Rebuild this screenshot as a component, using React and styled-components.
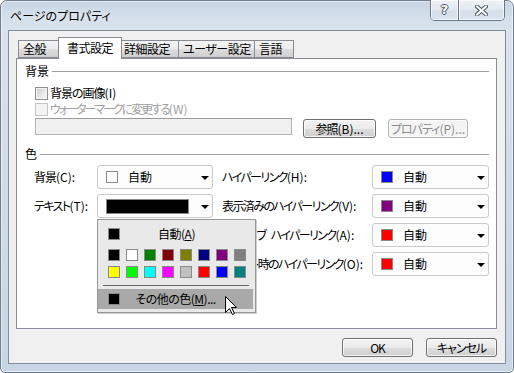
import React from 'react';
import styled, { createGlobalStyle } from 'styled-components';

const Global = createGlobalStyle`
  html, body { margin: 0; padding: 0; background: #ffffff; }
  body {
    width: 514px; height: 373px; overflow: hidden;
    font-family: "Noto Sans CJK JP", "Noto Sans", sans-serif;
    font-size: 12px;
    font-feature-settings: "palt" 1;
    color: #000;
  }
  * { box-sizing: border-box; }
`;

const Window = styled.div`
  width: 514px;
  height: 373px;
  border: 1px solid #6f7d8e;
  border-radius: 7px 7px 5px 5px;
  background: linear-gradient(180deg, #c6d4e4 0px, #d3deea 14px, #d9e3ee 30px, #cfdbe8 200px, #c8d5e4 373px);
  display: flex;
  flex-direction: column;
  box-shadow: inset 0 0 0 1px rgba(255,255,255,0.55);
`;

const TitleBar = styled.div`
  height: 29px;
  display: flex;
  align-items: flex-start;
  flex-shrink: 0;
`;

const TitleText = styled.div`
  padding-left: 9px;
  line-height: 29px;
  font-size: 12px;
  color: #000;
  text-shadow: 0 0 6px rgba(255,255,255,0.9);
`;

const Controls = styled.div`
  margin-left: auto;
  margin-right: 8px;
  margin-top: -1px;
  display: flex;
  height: 21px;
  border: 1px solid #6c7888;
  border-top: none;
  border-radius: 0 0 5px 5px;
  overflow: hidden;
`;

const CtrlButton = styled.div`
  width: ${p => p.$w}px;
  height: 100%;
  display: flex;
  align-items: center;
  justify-content: center;
  background: linear-gradient(180deg, #eef2f7 0%, #e3e9f1 45%, #d6dfe9 55%, #dbe4ee 100%);
  box-shadow: inset 0 0 0 1px rgba(255,255,255,0.7);
  & + & { border-left: 1px solid #6c7888; }
`;

const HelpGlyph = styled.span`
  font-family: "DejaVu Sans", sans-serif;
  font-weight: bold;
  font-size: 13px;
  line-height: 1;
  margin-top: -2px;
  color: #ffffff;
  text-shadow: 1px 0 0 #4d5866, -1px 0 0 #4d5866, 0 1px 0 #4d5866, 0 -1px 0 #4d5866;
`;

const Client = styled.div`
  flex: 1;
  margin: 0 7px 8px 7px;
  border: 1px solid #7f8d9d;
  background: #f0f0f0;
  display: flex;
  flex-direction: column;
  padding: 6px 8px 0 7px;
`;

const TabStrip = styled.div`
  display: flex;
  align-items: flex-end;
  height: 21px;
  padding-left: 2px;
  position: relative;
  z-index: 1;
`;

const Tab = styled.div`
  width: ${p => p.$w}px;
  height: ${p => (p.$active ? 22 : 18)}px;
  margin-bottom: ${p => (p.$active ? -1 : 0)}px;
  margin-left: ${p => (p.$active ? -2 : p.$first ? 0 : -1)}px;
  margin-right: ${p => (p.$active ? -2 : 0)}px;
  border: 1px solid #898c95;
  border-bottom: ${p => (p.$active ? 'none' : '1px solid #898c95')};
  background: ${p => (p.$active ? '#ffffff' : 'linear-gradient(180deg, #f3f3f3 0%, #ebebeb 50%, #dddddd 51%, #cfcfcf 100%)')};
  position: relative;
  z-index: ${p => (p.$active ? 2 : 1)};
  display: flex;
  align-items: center;
  justify-content: ${p => (p.$active ? 'center' : 'flex-start')};
  padding-left: ${p => (p.$active ? 0 : 4)}px;
  padding-bottom: ${p => (p.$active ? 2 : 0)}px;
  font-size: 12px;
  line-height: 16px;
  letter-spacing: -0.5px;
  white-space: nowrap;
`;

const Panel = styled.div`
  height: 271px;
  border: 1px solid #898c95;
  background: #ffffff;
  padding: 4px 7px 0 8px;
  display: flex;
  flex-direction: column;
  letter-spacing: -1px;
`;

const SectionHeader = styled.div`
  display: flex;
  align-items: center;
  gap: 3px;
  height: 16px;
  margin-top: ${p => p.$mt || 0}px;
  line-height: 16px;
  letter-spacing: 0;
`;

const Rule = styled.div`
  flex: 1;
  height: 1px;
  background: #a0a0a0;
`;

const Indent = styled.div`
  padding-left: 10px;
  margin-top: 6px;
  display: flex;
  flex-direction: column;
`;

const CheckRow = styled.div`
  display: flex;
  align-items: center;
  gap: 2px;
  height: 16px;
  line-height: 16px;
  color: ${p => (p.$disabled ? '#a0a0a0' : '#000')};
  letter-spacing: ${p => (p.$tight ? -2 : -1)}px;
  white-space: nowrap;
`;

const Key = styled.span`
  letter-spacing: 0;
`;

const CheckBox = styled.div`
  width: 13px;
  height: 13px;
  border: 1px solid ${p => (p.$disabled ? '#c4c4c4' : '#8e8f8f')};
  background: ${p => (p.$disabled ? '#f4f4f4' : 'linear-gradient(135deg, #c9ccd1 0%, #eeeeee 70%, #f8f8f8 100%)')};
  box-shadow: inset 0 0 0 1px #f4f4f4;
  flex-shrink: 0;
`;

const FieldRow = styled.div`
  display: flex;
  align-items: flex-start;
  margin-top: 1px;
`;

const TextField = styled.div`
  width: 257px;
  height: 17px;
  border: 1px solid #b5b5b5;
  border-top-color: #9a9a9a;
  background: #f0f0f0;
`;

const Button = styled.div`
  width: ${p => p.$w}px;
  height: 19px;
  margin-left: ${p => p.$ml || 0}px;
  margin-top: ${p => p.$mt || 0}px;
  display: flex;
  align-items: center;
  justify-content: center;
  font-size: 12px;
  line-height: 17px;
  letter-spacing: -1px;
  white-space: nowrap;
  color: ${p => (p.$disabled ? '#8d8d8d' : '#000')};
  border: 1px solid ${p => (p.$disabled ? '#adb2b5' : '#707070')};
  border-radius: 3px;
  background: ${p => (p.$disabled ? '#f4f4f4' : 'linear-gradient(180deg, #f2f2f2 0%, #ebebeb 50%, #dddddd 51%, #cfcfcf 100%)')};
  box-shadow: inset 0 0 0 1px rgba(255,255,255,0.75);
`;

const ColorGrid = styled.div`
  display: grid;
  grid-template-columns: 63px 116px 159px 117px;
  grid-auto-rows: 24px;
  row-gap: 5px;
  margin-top: 3px;
  margin-left: 9px;
`;

const FieldLabel = styled.div`
  display: flex;
  align-items: center;
  padding-left: ${p => p.$pl || 0}px;
  white-space: pre;
  overflow: hidden;
  line-height: 16px;
  letter-spacing: ${p => (p.$tight ? -1.6 : -1)}px;
`;

const Combo = styled.div`
  position: relative;
  display: flex;
  align-items: center;
  padding-left: 8px;
  border: 1px solid #cacaca;
  border-radius: 3px;
  background: #fdfdfd;
  line-height: 16px;
  letter-spacing: 0;
`;

const Swatch = styled.div`
  width: ${p => p.$w || 12}px;
  height: ${p => p.$h || 12}px;
  background: ${p => p.$c};
  border: 1px solid #8a8a8a;
  flex-shrink: 0;
`;

const ComboText = styled.span`
  margin-left: 10px;
`;

const Arrow = styled.div`
  position: absolute;
  right: 3px;
  top: 10px;
  width: 0;
  height: 0;
  border-left: 4px solid transparent;
  border-right: 4px solid transparent;
  border-top: 4px solid #000;
`;

const Popup = styled.div`
  position: absolute;
  left: -1px;
  top: calc(100% + 2px);
  width: 159px;
  height: 94px;
  border: 1px solid #979797;
  background: #e9e9e9;
  box-shadow: 1px 1px 0 #cfcfcf;
  z-index: 10;
  display: flex;
  flex-direction: column;
`;

const PopupRow = styled.div`
  position: relative;
  display: grid;
  grid-template-columns: 12px 1fr 12px;
  align-items: center;
  height: ${p => p.$h}px;
  margin-top: ${p => p.$mt || 0}px;
  margin-right: ${p => p.$mr || 0}px;
  padding: 0 10px 0 10px;
  background: ${p => p.$bg || 'transparent'};
  line-height: 16px;
  letter-spacing: -0.5px;
`;

const PopupText = styled.span`
  text-align: center;
  white-space: nowrap;
`;

const PaletteGrid = styled.div`
  display: grid;
  grid-template-columns: repeat(8, 12px);
  grid-auto-rows: 12px;
  column-gap: 6px;
  row-gap: 5px;
  padding-left: 10px;
  margin-top: 1px;
`;

const Separator = styled.div`
  height: 1px;
  margin: 7px 6px 0 5px;
  background: #6a6a6a;
`;

const Cursor = styled.svg`
  position: absolute;
  left: 127px;
  top: 7px;
  overflow: visible;
`;

const ButtonRow = styled.div`
  display: flex;
  justify-content: flex-end;
  gap: 13px;
  margin-top: 9px;
`;

const row1 = ['#000000', '#ffffff', '#008000', '#800000', '#808000', '#000080', '#800080', '#808080'];
const row2 = ['#ffff00', '#00ff00', '#00ffff', '#ff00ff', '#c0c0c0', '#ff0000', '#0000ff', '#008080'];

function ColorCombo({ color, children }) {
  return (
    <Combo>
      <Swatch $c={color} />
      <ComboText>自動</ComboText>
      <Arrow />
      {children}
    </Combo>
  );
}

export default function App() {
  return (
    <>
      <Global />
      <Window>
        <TitleBar>
          <TitleText>ページのプロパティ</TitleText>
          <Controls>
            <CtrlButton $w={27}>
              <HelpGlyph>?</HelpGlyph>
            </CtrlButton>
            <CtrlButton $w={46}>
              <svg width="13" height="11" viewBox="0 0 13 11">
                <path d="M2 1.5 L11 9.5 M11 1.5 L2 9.5" stroke="#4d5866" strokeWidth="4" strokeLinecap="square" />
                <path d="M2 1.5 L11 9.5 M11 1.5 L2 9.5" stroke="#ffffff" strokeWidth="2" strokeLinecap="square" />
              </svg>
            </CtrlButton>
          </Controls>
        </TitleBar>
        <Client>
          <TabStrip>
            <Tab $w={42} $first>全般</Tab>
            <Tab $w={64} $active>書式設定</Tab>
            <Tab $w={60}>詳細設定</Tab>
            <Tab $w={77}>ユーザー設定</Tab>
            <Tab $w={40}>言語</Tab>
          </TabStrip>
          <Panel>
            <SectionHeader>
              <span>背景</span>
              <Rule />
            </SectionHeader>
            <Indent>
              <CheckRow>
                <CheckBox />
                <span>背景の画像<Key>(I)</Key></span>
              </CheckRow>
              <CheckRow $disabled $tight>
                <CheckBox $disabled />
                <span>ウォーターマークに変更する<Key>(W)</Key></span>
              </CheckRow>
              <FieldRow>
                <TextField />
                <Button $w={73} $ml={11} $mt={1}>参照<Key>(B)...</Key></Button>
                <Button $w={80} $ml={12} $mt={1} $disabled>プロパティ<Key>(P)...</Key></Button>
              </FieldRow>
            </Indent>
            <SectionHeader $mt={8}>
              <span>色</span>
              <Rule />
            </SectionHeader>
            <ColorGrid>
              <FieldLabel>背景<Key>(C):</Key></FieldLabel>
              <ColorCombo color="#ffffff" />
              <FieldLabel $pl={9} $tight>ハイパーリンク<Key>(H):</Key></FieldLabel>
              <ColorCombo color="#0000ff" />

              <FieldLabel $tight>テキスト<Key>(T):</Key></FieldLabel>
              <Combo>
                <Swatch $c="#000000" $w={83} $h={15} />
                <Arrow />
                <Popup>
                  <PopupRow $h={28}>
                    <Swatch $c="#000000" />
                    <PopupText>自動(<u>A</u>)</PopupText>
                  </PopupRow>
                  <PaletteGrid>
                    {row1.concat(row2).map((c, i) => (
                      <Swatch key={i} $c={c} />
                    ))}
                  </PaletteGrid>
                  <Separator />
                  <PopupRow $h={20} $mt={3} $mr={2} $bg="#a9a9a9">
                    <Swatch $c="#000000" />
                    <PopupText>その他の色(<u>M</u>)...</PopupText>
                    <Cursor width="12" height="19" viewBox="0 0 12 19">
                      <path d="M0.5 0.5 L0.5 16.5 L4.5 12.5 L7.5 18.5 L9.5 17.5 L6.5 11.5 L11.5 11.5 Z" fill="#ffffff" stroke="#000000" strokeWidth="1" strokeLinejoin="miter" />
                    </Cursor>
                  </PopupRow>
                </Popup>
              </Combo>
              <FieldLabel $pl={9} $tight>表示済みのハイパーリンク<Key>(V):</Key></FieldLabel>
              <ColorCombo color="#800080" />

              <div />
              <div />
              <FieldLabel $pl={9} $tight>アクティブ<Key>  </Key>ハイパーリンク<Key>(A):</Key></FieldLabel>
              <ColorCombo color="#ff0000" />

              <div />
              <div />
              <FieldLabel $pl={9} $tight>ポイント時のハイパーリンク<Key>(O):</Key></FieldLabel>
              <ColorCombo color="#ff0000" />
            </ColorGrid>
          </Panel>
          <ButtonRow>
            <Button $w={71}>OK</Button>
            <Button $w={71}>キャンセル</Button>
          </ButtonRow>
        </Client>
      </Window>
    </>
  );
}
